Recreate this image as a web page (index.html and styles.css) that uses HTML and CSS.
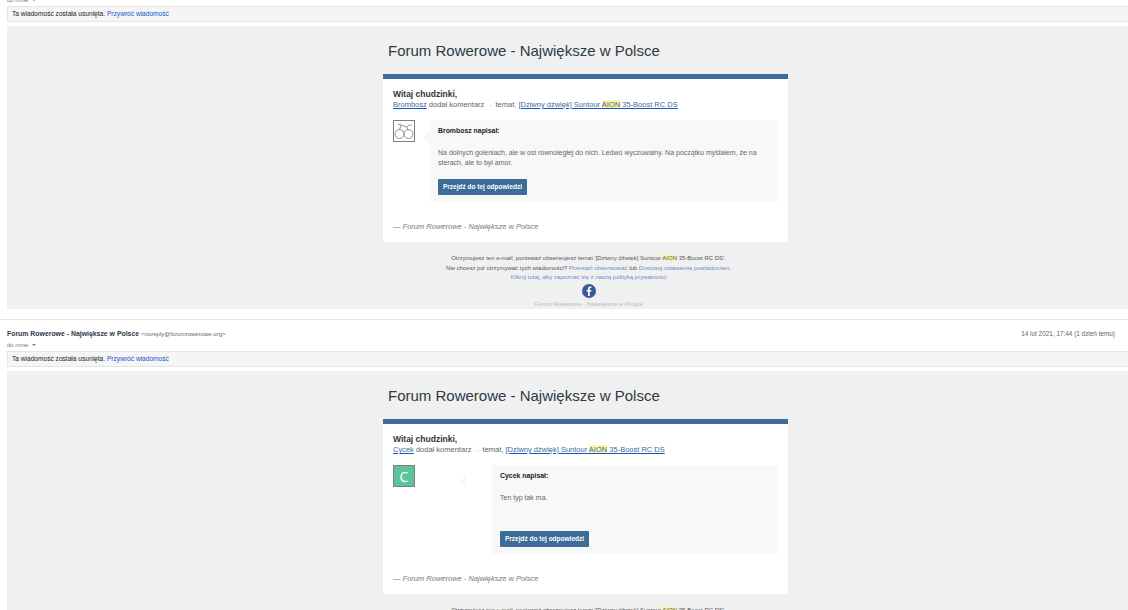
FILE: index.html
```html
<!DOCTYPE html>
<html lang="pl">
<head>
  <meta charset="UTF-8">
  <title>Forum Rowerowe - powiadomienia</title>
  <link rel="stylesheet" href="styles.css">
</head>
<body>
  <div class="thread">
    <div class="message">
      <div class="msg-head">
        <div><b class="sender">Forum Rowerowe - Największe w Polsce</b> <span class="sender-mail">&lt;noreply@forumrowerowe.org&gt;</span></div>
        <div class="msg-date">14 lut 2021, 17:44 (1 dzień temu)</div>
      </div>
      <div class="to-me">do mnie <span class="caret"></span></div>
      <div class="notice">Ta wiadomość została usunięta. <a href="#">Przywróć wiadomość</a></div>
      <div class="mail">
        <h1 class="mail-title">Forum Rowerowe - Największe w Polsce</h1>
        <div class="card">
          <div class="greeting">Witaj chudzinki,</div>
          <div class="summary"><a href="#">Brombosz</a> dodał komentarz <span class="arrow">→</span> temat, <a href="#">[Dziwny dźwięk] Suntour <mark>AION</mark> 35-Boost RC DS</a></div>
          <div class="comment">
            <div class="avatar">
              <svg viewBox="0 0 20 20" width="20" height="20" fill="none" stroke="#8d9599" stroke-width="1">
                <circle cx="5.500" cy="13" r="4.500"/>
                <circle cx="14.500" cy="13" r="4.500"/>
                <path d="M5.500 9 7 4 12.500 6 14.500 9M7 4 4 3M12.500 6 16.500 3.500 18 5"/>
              </svg>
            </div>
            <div class="bubble">
              <span class="bubble-tip"></span>
              <div class="author">Brombosz napisał:</div>
              <p class="body-text">Na dolnych goleniach, ale w osi równoległej do nich. Ledwo wyczuwalny. Na początku myślałem, że na sterach, ale to był amor.</p>
              <a class="btn btn-first" href="#">Przejdź do tej odpowiedzi</a>
            </div>
          </div>
          <div class="signoff">— Forum Rowerowe - Największe w Polsce</div>
        </div>
        <div class="mail-foot">
          <div>Otrzymujesz ten e-mail, ponieważ obserwujesz temat '[Dziwny dźwięk] Suntour <mark>AION</mark> 35-Boost RC DS'.</div>
          <div>Nie chcesz już otrzymywać tych wiadomości? <a href="#">Przestań obserwować</a> lub <a href="#">Dostosuj ustawienia powiadomień</a>.</div>
          <div><a href="#">Kliknij tutaj, aby zapoznać się z naszą polityką prywatności</a></div>
          <svg class="fb" viewBox="0 0 14 14" width="14" height="14">
            <circle cx="7" cy="7" r="7" fill="#3b5998"/>
            <path d="M7.700 12V7.600h1.500l.2-1.700H7.700V4.800c0-.5.2-.8.8-.8h.9V2.500c-.2 0-.7-.1-1.300-.1C6.800 2.400 6 3.200 6 4.600v1.300H4.500v1.700H6V12z" fill="#fff"/>
          </svg>
          <div class="foot-name">Forum Rowerowe - Największe w Polsce</div>
        </div>
      </div>
    </div>

    <div class="message">
      <div class="msg-head">
        <div><b class="sender">Forum Rowerowe - Największe w Polsce</b> <span class="sender-mail">&lt;noreply@forumrowerowe.org&gt;</span></div>
        <div class="msg-date">14 lut 2021, 17:44 (1 dzień temu)</div>
      </div>
      <div class="to-me">do mnie <span class="caret"></span></div>
      <div class="notice">Ta wiadomość została usunięta. <a href="#">Przywróć wiadomość</a></div>
      <div class="mail">
        <h1 class="mail-title">Forum Rowerowe - Największe w Polsce</h1>
        <div class="card">
          <div class="greeting">Witaj chudzinki,</div>
          <div class="summary"><a href="#">Cycek</a> dodał komentarz <span class="arrow">→</span> temat, <a href="#">[Dziwny dźwięk] Suntour <mark>AION</mark> 35-Boost RC DS</a></div>
          <div class="comment comment-wide">
            <div class="avatar avatar-letter">C</div>
            <div class="bubble">
              <span class="bubble-tip"></span>
              <div class="author">Cycek napisał:</div>
              <p class="body-text">Ten typ tak ma.</p>
              <a class="btn btn-second" href="#">Przejdź do tej odpowiedzi</a>
            </div>
          </div>
          <div class="signoff">— Forum Rowerowe - Największe w Polsce</div>
        </div>
        <div class="mail-foot">
          <div>Otrzymujesz ten e-mail, ponieważ obserwujesz temat '[Dziwny dźwięk] Suntour <mark>AION</mark> 35-Boost RC DS'.</div>
          <div>Nie chcesz już otrzymywać tych wiadomości? <a href="#">Przestań obserwować</a> lub <a href="#">Dostosuj ustawienia powiadomień</a>.</div>
        </div>
      </div>
    </div>
  </div>
</body>
</html>
```

FILE: styles.css
```css
html, body {
  margin: 0;
  padding: 0;
  height: 100%;
  overflow: hidden;
  background: #fff;
  font-family: 'Liberation Sans', Arial, sans-serif;
  color: #222;
}
a {
  color: #3d6c99;
  text-decoration: none;
}
mark {
  background: #fff3a8;
  color: inherit;
}
.thread {
  margin-top: -26px;
}
.message {
  padding: 9px 0 10px 7px;
  border-top: 1px solid #e8e8e8;
}
.msg-head {
  display: flex;
  justify-content: space-between;
  align-items: center;
  height: 10px;
  padding-right: 13px;
  font-size: 7px;
  line-height: 10px;
}
.sender {
  color: #2b3a4a;
  font-size: 6.9px;
}
.sender-mail {
  color: #666;
  font-size: 6px;
}
.msg-date {
  color: #666;
  font-size: 6.4px;
}
.to-me {
  display: flex;
  align-items: center;
  gap: 3px;
  height: 10px;
  margin-top: 1px;
  font-size: 6px;
  color: #777;
}
.caret {
  width: 0;
  height: 0;
  border-left: 2.5px solid transparent;
  border-right: 2.5px solid transparent;
  border-top: 2.5px solid #777;
  margin-left: 1px;
}
.notice {
  box-sizing: border-box;
  height: 16px;
  line-height: 14px;
  padding-left: 4px;
  margin-top: 1px;
  background: #f5f5f5;
  border: 1px solid #e5e5e5;
  border-right: 0;
  font-size: 6.6px;
  color: #222;
}
.notice a {
  color: #15c;
}
.mail {
  margin-top: 4px;
  background: #f0f0f0;
  padding-left: 376px;
  overflow: hidden;
}
.mail-title {
  margin: 0;
  width: 405px;
  height: 48px;
  line-height: 50px;
  padding-left: 5px;
  box-sizing: border-box;
  font-size: 15px;
  font-weight: normal;
  color: #2c3a45;
  white-space: nowrap;
}
.card {
  box-sizing: border-box;
  width: 405px;
  padding: 10px 10px 10px;
  background: #fff;
  border-top: 5px solid #3d6c99;
}
.greeting {
  height: 10px;
  line-height: 10px;
  font-size: 8.5px;
  font-weight: bold;
  color: #333;
}
.summary {
  height: 11px;
  line-height: 11px;
  font-size: 7.5px;
  color: #666;
  white-space: nowrap;
}
.summary a {
  text-decoration: underline;
  text-decoration-color: #15c;
}
.arrow {
  color: #d9c9a8;
  font-size: 7px;
}
.comment {
  display: flex;
  align-items: flex-start;
  margin-top: 10px;
}
.avatar {
  box-sizing: border-box;
  flex: none;
  width: 22px;
  height: 22px;
  display: flex;
  align-items: center;
  justify-content: center;
  border: 1px solid #808080;
  background: #fff;
}
.avatar-letter {
  background: #5fc39c;
  color: #fff;
  font-family: 'Open Sans', sans-serif;
  font-size: 14px;
}
.bubble {
  position: relative;
  box-sizing: border-box;
  width: 348px;
  height: 82px;
  margin-left: 15px;
  padding: 7px 8px;
  background: #f8f8f8;
}
.comment-wide .bubble {
  width: 286px;
  height: 89px;
  margin-left: 77px;
}
.bubble-tip {
  position: absolute;
  left: -7px;
  top: 10px;
  width: 0;
  height: 0;
  border-top: 7.5px solid transparent;
  border-bottom: 7.5px solid transparent;
  border-right: 7px solid #f8f8f8;
}
.comment-wide .bubble-tip {
  left: -33px;
}
.author {
  height: 8px;
  line-height: 8px;
  font-weight: bold;
  color: #222;
  font-size: 6.9px;
}
.body-text {
  margin: 13px 0 0;
  line-height: 10px;
  color: #666;
  font-size: 7px;
}
.btn {
  display: block;
  box-sizing: border-box;
  width: 89px;
  height: 16px;
  line-height: 16px;
  text-align: center;
  background: #3d6c99;
  border-radius: 1px;
  color: #fff;
  font-size: 6.5px;
  font-weight: bold;
}
.btn-first {
  margin-top: 11px;
}
.btn-second {
  margin-top: 28px;
}
.signoff {
  height: 10px;
  line-height: 10px;
  margin-top: 20px;
  font-size: 7.5px;
  font-style: italic;
  color: #777;
}
.mail-foot {
  box-sizing: border-box;
  width: 405px;
  padding: 12px 0 0 6px;
  text-align: center;
  font-size: 6px;
  line-height: 9.5px;
  color: #555;
}
.mail-foot a {
  color: #6a8fc8;
}
.fb {
  display: block;
  margin: 1px auto 0;
}
.foot-name {
  margin-top: 2px;
  color: #bbb;
}
```
